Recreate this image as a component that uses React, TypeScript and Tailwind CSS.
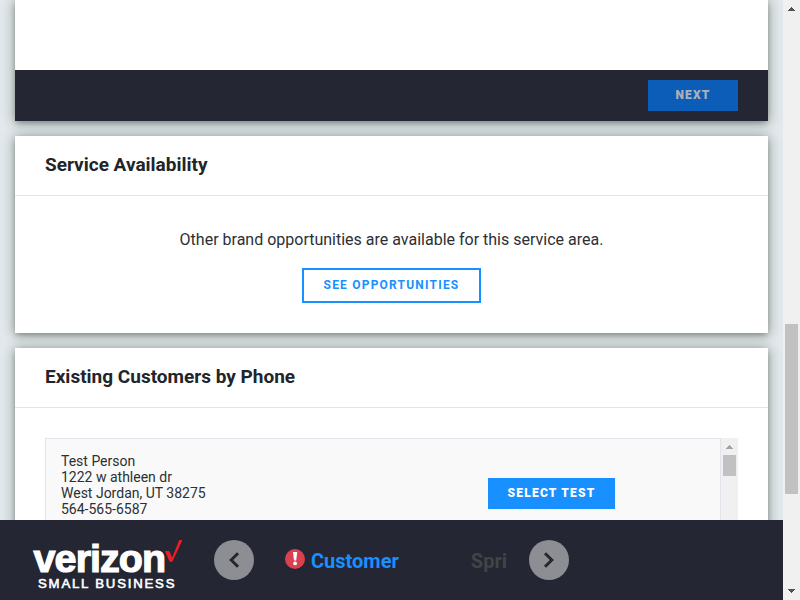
import React from 'react';

const shadow =
  'shadow-[0_3px_5px_-1px_rgba(50,62,50,0.3),0_1px_10px_0_rgba(50,62,50,0.34),0_1px_14px_0_rgba(50,62,50,0.2)]';

function Triangle({ up, color }: { up?: boolean; color: string }) {
  return (
    <svg width="7" height="4" viewBox="0 0 7 4" shapeRendering="crispEdges" fill={color}>
      {up ? (
        <path d="M3 0h1v1h1v1h1v1h1v1H0V3h1V2h1V1h1z" />
      ) : (
        <path d="M0 0h7v1H6v1H5v1H4v1H3V3H2V2H1V1H0z" />
      )}
    </svg>
  );
}

function Logo() {
  return (
    <svg width="152" height="70" viewBox="0 0 152 70" className="shrink-0">
      <g fontFamily="'Liberation Sans', Arial, sans-serif" fill="#fff" stroke="#fff">
        <text x="3.6" y="47.3" fontSize="39.5" fontWeight="700" textLength="132.6" lengthAdjust="spacing" strokeWidth="1.2">
          verizon
        </text>
        <text x="8" y="63" fontSize="13.2" textLength="136.5" lengthAdjust="spacing" strokeWidth="0.6">
          SMALL BUSINESS
        </text>
      </g>
      <path d="M135 26h4.2l3 6.6L149.2 15h3.3L142.4 36.8h-2.8z" fill="#ee1d24" />
    </svg>
  );
}

function RoundButton({ dir }: { dir: 'left' | 'right' }) {
  return (
    <button className="flex size-10 shrink-0 items-center justify-center rounded-full bg-[#8d8e93]">
      <svg width="40" height="40" viewBox="0 0 40 40" fill="none" stroke="#242633" strokeWidth="3">
        <path d={dir === 'left' ? 'M24 13.2 17.2 20l6.8 6.8' : 'M16 13.2l6.8 6.8-6.8 6.8'} />
      </svg>
    </button>
  );
}

function CardTitle({ children }: { children: React.ReactNode }) {
  return (
    <h2 className="h-[60px] shrink-0 border-b border-[#e1e3e5] px-[30px] pt-4 text-[19px] leading-[25px] font-bold">
      {children}
    </h2>
  );
}

export default function App() {
  return (
    <div className="flex h-[600px] w-[800px] overflow-hidden bg-[#e2e8eb] font-['Roboto',sans-serif] text-[#212529]">
      <div className="flex w-[783px] flex-col">
        <main className="flex h-[520px] flex-col gap-[15px] overflow-hidden px-[15px]">
          <section className={`h-[121px] w-[753px] shrink-0 bg-white ${shadow}`}>
            <div className="h-[70px]" />
            <div className="flex h-[51px] justify-end bg-[#242633] px-[30px] pt-2.5">
              <button className="h-[31px] w-[90px] bg-[#0c5db8] pb-0.5 text-xs font-black tracking-[1.2px] text-[#afb0b5]">
                NEXT
              </button>
            </div>
          </section>

          <section className={`flex h-[197px] w-[753px] shrink-0 flex-col bg-white ${shadow}`}>
            <CardTitle>Service Availability</CardTitle>
            <div className="flex flex-col items-center pt-8">
              <p className="text-base leading-6 text-[#2c3034]">
                Other brand opportunities are available for this service area.
              </p>
              <button className="mt-4 h-[35px] w-[179px] border-2 border-[#1890ff] pb-0.5 text-xs font-bold tracking-[1.2px] text-[#1890ff]">
                SEE OPPORTUNITIES
              </button>
            </div>
          </section>

          <section className={`flex h-[300px] w-[753px] shrink-0 flex-col bg-white ${shadow}`}>
            <CardTitle>Existing Customers by Phone</CardTitle>
            <div className="mx-[30px] mt-[30px] flex h-[150px]">
              <div className="flex w-[676px] justify-between border border-[#dfe5ea] bg-[#f9f9f9] pt-3.5 pr-[105px] pl-[15px]">
                <address className="text-sm leading-4 text-[#2c3034] not-italic">
                  Test Person
                  <br />
                  1222 w athleen dr
                  <br />
                  West Jordan, UT 38275
                  <br />
                  564-565-6587
                </address>
                <button className="mt-[25px] h-[31px] w-[127px] bg-[#1890ff] pb-0.5 text-xs font-black tracking-[1.25px] text-white">
                  SELECT TEST
                </button>
              </div>
              <div className="flex w-[17px] flex-col items-center bg-[#f0f0f0] pt-[7px]">
                <Triangle up color="#a3a3a3" />
                <div className="mt-1.5 h-[21px] w-[13px] bg-[#c1c1c1]" />
              </div>
            </div>
          </section>
        </main>

        <footer className="flex h-20 items-center bg-[#242633] pl-[30px]">
          <Logo />
          <div className="ml-8 flex items-center">
            <RoundButton dir="left" />
            <div className="flex w-[275px] items-center pl-[31px]">
              <svg width="20" height="20" viewBox="0 0 20 20" className="mb-0.5 shrink-0">
                <circle cx="10" cy="10" r="10" fill="#dc3f50" />
                <path d="M8 3h4.2l-1 8.5H9z" fill="#fff" />
                <circle cx="10.1" cy="14.4" r="1.9" fill="#fff" />
              </svg>
              <span className="mt-0.5 ml-1.5 text-xl leading-6 font-bold text-[#1890ff]">Customer</span>
              <span className="mt-0.5 ml-[72px] text-xl leading-6 font-bold text-[#424446]">Spri</span>
            </div>
            <RoundButton dir="right" />
          </div>
        </footer>
      </div>

      <div className="flex w-[17px] flex-col items-center bg-[#f0f0f0] pt-[7px]">
        <Triangle up color="#505050" />
        <div className="mt-[313px] h-[170px] w-[13px] bg-[#c1c1c1]" />
        <div className="mt-auto mb-[7px]">
          <Triangle color="#505050" />
        </div>
      </div>
    </div>
  );
}
